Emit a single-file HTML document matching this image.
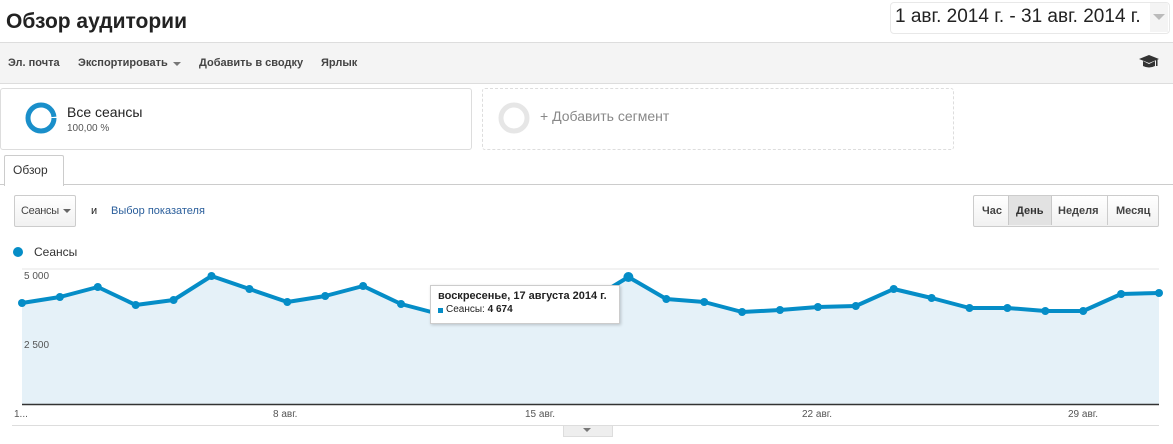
<!DOCTYPE html>
<html><head><meta charset="utf-8"><style>
body{margin:0;width:1173px;height:444px;overflow:hidden;background:#fff;font-family:"Liberation Sans",Arial,sans-serif;position:relative}
.a{position:absolute}
</style></head><body>
<div class="a" style="left:6px;top:10px;font-size:21px;font-weight:bold;color:#222">Обзор аудитории</div>
<div class="a" style="left:890px;top:2px;width:278px;height:30px;border:1px solid #e8e8e8;border-radius:4px;background:#fff"></div>
<div class="a" style="left:895px;top:6px;font-size:19px;color:#222">1 авг. 2014 г. - 31 авг. 2014 г.</div>
<div class="a" style="left:1150px;top:3px;width:18px;height:29px;background:#f4f4f4"></div>
<div class="a" style="left:1153px;top:14px;border-left:6px solid transparent;border-right:6px solid transparent;border-top:6px solid #bbb"></div>
<div class="a" style="left:0;top:42px;width:1173px;height:40px;background:#f4f4f4;border-top:1px solid #ddd;border-bottom:1px solid #ddd"></div>
<div class="a" style="left:8px;top:57px;font-size:11px;font-weight:bold;color:#444">Эл. почта</div>
<div class="a" style="left:78px;top:57px;font-size:11px;font-weight:bold;color:#444">Экспортировать</div>
<div class="a" style="left:173px;top:62px;border-left:4px solid transparent;border-right:4px solid transparent;border-top:4px solid #777"></div>
<div class="a" style="left:199px;top:57px;font-size:11px;font-weight:bold;color:#444">Добавить в сводку</div>
<div class="a" style="left:321px;top:57px;font-size:11px;font-weight:bold;color:#444">Ярлык</div>
<svg class="a" style="left:1138px;top:54px" width="22" height="16" viewBox="0 0 22 16"><path d="M1 5 L11 1 L21 5 L11 9Z" fill="#333"/><path d="M5 7 L5 12 Q11 15 17 12 L17 7 L11 10Z" fill="#333"/><rect x="18" y="5" width="1.5" height="7" fill="#333"/></svg>
<div class="a" style="left:0;top:88px;width:470px;height:60px;border:1px solid #ddd;border-radius:3px"></div>
<svg class="a" style="left:24px;top:101px" width="34" height="34"><circle cx="17" cy="17" r="13" fill="none" stroke="#1a8fca" stroke-width="5" stroke-dasharray="80 2"/></svg>
<div class="a" style="left:67px;top:104px;font-size:14px;color:#222">Все сеансы</div>
<div class="a" style="left:67px;top:123px;font-size:10px;color:#555">100,00 %</div>
<div class="a" style="left:482px;top:88px;width:470px;height:60px;border:1px dashed #ddd;border-radius:3px"></div>
<svg class="a" style="left:497px;top:101px" width="34" height="34"><circle cx="17" cy="17" r="13" fill="none" stroke="#e6e6e6" stroke-width="5"/></svg>
<div class="a" style="left:540px;top:108px;font-size:14px;color:#888">+ Добавить сегмент</div>
<div class="a" style="left:0;top:184px;width:1173px;height:1px;background:#ccc"></div>
<div class="a" style="left:4px;top:155px;width:58px;height:30px;border:1px solid #ccc;border-bottom:none;background:#fff;border-radius:2px 2px 0 0"></div>
<div class="a" style="left:13px;top:163px;font-size:12px;color:#333">Обзор</div>
<div class="a" style="left:14px;top:195px;width:60px;height:30px;border:1px solid #ccc;border-radius:2px;background:linear-gradient(#fff,#f1f1f1)"></div>
<div class="a" style="left:21px;top:205px;font-size:11px;color:#444;letter-spacing:-0.3px">Сеансы</div>
<div class="a" style="left:63px;top:209px;border-left:4px solid transparent;border-right:4px solid transparent;border-top:4px solid #666"></div>
<div class="a" style="left:91px;top:205px;font-size:11px;color:#222">и</div>
<div class="a" style="left:111px;top:205px;font-size:11px;color:#2a5e9b">Выбор показателя</div>
<div class="a" style="left:973px;top:195px;width:184px;height:30px;border:1px solid #ccc;border-radius:2px;background:linear-gradient(#fff,#f1f1f1)"></div>
<div class="a" style="left:1008px;top:196px;width:42px;height:29px;background:#e2e2e2;border-left:1px solid #c8c8c8;border-right:1px solid #c8c8c8"></div>
<div class="a" style="left:1107px;top:196px;width:1px;height:29px;background:#ccc"></div>
<div class="a" style="left:982px;top:205px;font-size:11px;font-weight:bold;color:#444">Час</div>
<div class="a" style="left:1016px;top:205px;font-size:11px;font-weight:bold;color:#333">День</div>
<div class="a" style="left:1058px;top:205px;font-size:11px;font-weight:bold;color:#444">Неделя</div>
<div class="a" style="left:1116px;top:205px;font-size:11px;font-weight:bold;color:#444">Месяц</div>
<div class="a" style="left:13px;top:247px;width:10px;height:10px;border-radius:50%;background:#058dc7"></div>
<div class="a" style="left:34px;top:245px;font-size:12px;color:#333">Сеансы</div>
<svg class="a" style="left:0;top:260px" width="1173" height="184">
<path d="M22 9H1159M22 78H1159" stroke="#e4e4e4" stroke-width="1"/>
<polygon fill="#e5f1f8" points="22,144 22,43 59.9,37 97.8,27 135.7,45 173.6,40 211.5,16 249.4,29 287.3,42 325.2,36 363.1,26 401,44 438.9,54 476.8,58 514.7,56 552.6,50 590.5,40 628.4,17 666.3,39 704.2,42 742.1,52 780,50 817.9,47 855.8,46 893.7,29 931.6,38 969.5,48 1007.4,48 1045.3,51 1083.2,51 1121.1,34 1159,33 1159,144"/>
<polyline fill="none" stroke="#058dc7" stroke-width="4" stroke-linejoin="round" points="22,43 59.9,37 97.8,27 135.7,45 173.6,40 211.5,16 249.4,29 287.3,42 325.2,36 363.1,26 401,44 438.9,54 476.8,58 514.7,56 552.6,50 590.5,40 628.4,17 666.3,39 704.2,42 742.1,52 780,50 817.9,47 855.8,46 893.7,29 931.6,38 969.5,48 1007.4,48 1045.3,51 1083.2,51 1121.1,34 1159,33"/>
<g fill="#058dc7"><circle cx="22" cy="43" r="4"/><circle cx="59.9" cy="37" r="4"/><circle cx="97.8" cy="27" r="4"/><circle cx="135.7" cy="45" r="4"/><circle cx="173.6" cy="40" r="4"/><circle cx="211.5" cy="16" r="4"/><circle cx="249.4" cy="29" r="4"/><circle cx="287.3" cy="42" r="4"/><circle cx="325.2" cy="36" r="4"/><circle cx="363.1" cy="26" r="4"/><circle cx="401" cy="44" r="4"/><circle cx="628.4" cy="17" r="5"/><circle cx="666.3" cy="39" r="4"/><circle cx="704.2" cy="42" r="4"/><circle cx="742.1" cy="52" r="4"/><circle cx="780" cy="50" r="4"/><circle cx="817.9" cy="47" r="4"/><circle cx="855.8" cy="46" r="4"/><circle cx="893.7" cy="29" r="4"/><circle cx="931.6" cy="38" r="4"/><circle cx="969.5" cy="48" r="4"/><circle cx="1007.4" cy="48" r="4"/><circle cx="1045.3" cy="51" r="4"/><circle cx="1083.2" cy="51" r="4"/><circle cx="1121.1" cy="34" r="4"/><circle cx="1159" cy="33" r="4"/></g>
<path d="M22 144.5H1159" stroke="#333" stroke-width="1.5"/>
<path d="M12 165.5H1159" stroke="#ddd" stroke-width="1"/>
</svg>
<div class="a" style="left:24px;top:271px;font-size:10px;color:#555">5 000</div>
<div class="a" style="left:24px;top:340px;font-size:10px;color:#555">2 500</div>
<div class="a" style="left:14px;top:409px;font-size:10px;color:#555">1...</div>
<div class="a" style="left:273px;top:409px;font-size:10px;color:#555">8 авг.</div>
<div class="a" style="left:525px;top:409px;font-size:10px;color:#555">15 авг.</div>
<div class="a" style="left:802px;top:409px;font-size:10px;color:#555">22 авг.</div>
<div class="a" style="left:1068px;top:409px;font-size:10px;color:#555">29 авг.</div>
<div class="a" style="left:563px;top:426px;width:48px;height:10px;background:#eee;border:1px solid #ddd;border-top:none"></div>
<div class="a" style="left:583px;top:428px;border-left:4px solid transparent;border-right:4px solid transparent;border-top:4px solid #777"></div>
<div class="a" style="left:430px;top:285px;width:188px;height:37px;background:#fff;border:1px solid #ccc;box-shadow:1px 1px 3px rgba(0,0,0,.2)"></div>
<div class="a" style="left:438px;top:290px;font-size:11px;font-weight:bold;color:#222">воскресенье, 17 августа 2014 г.</div>
<div class="a" style="left:438px;top:308px;width:5px;height:5px;background:#058dc7"></div>
<div class="a" style="left:446px;top:304px;font-size:10px;color:#222">Сеансы: <b>4 674</b></div>
</body></html>
